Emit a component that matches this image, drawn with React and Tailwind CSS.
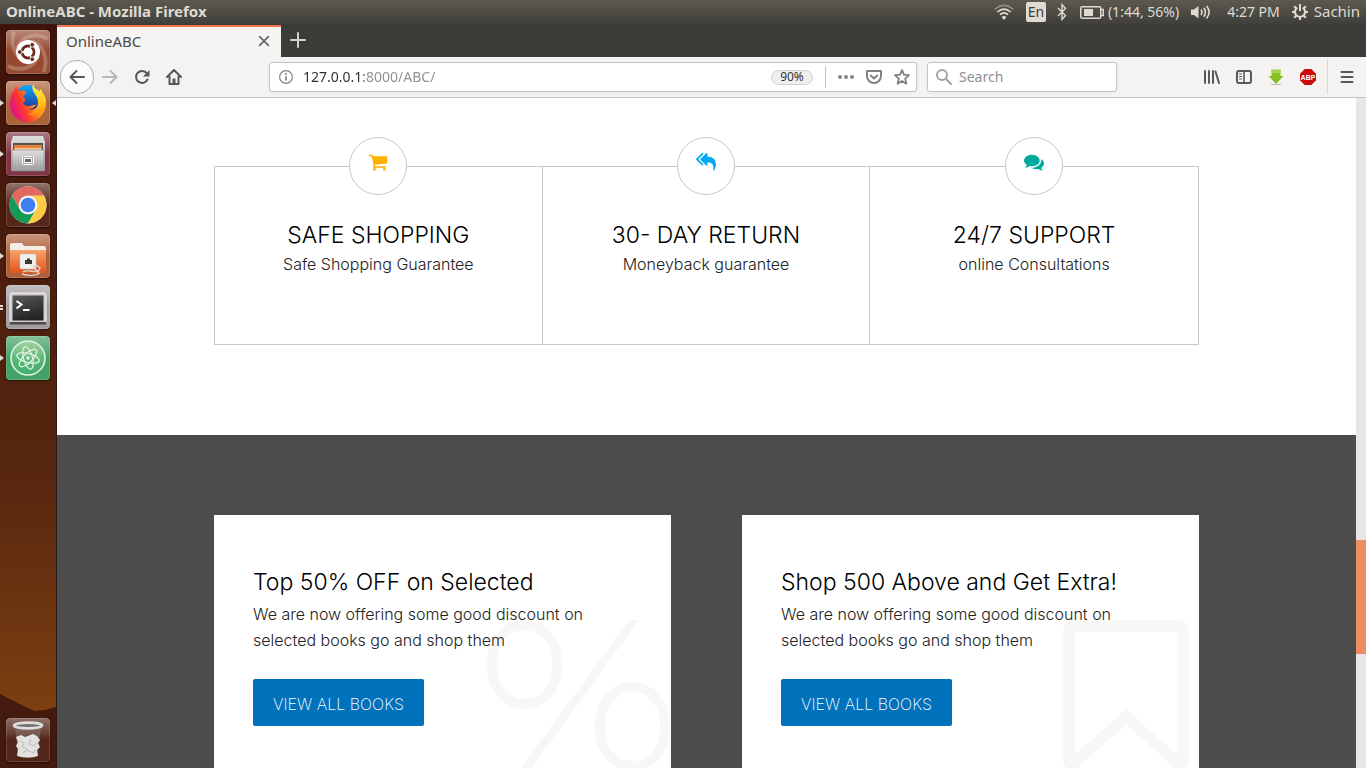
import React from "react";

const INK = "#585858";

/* ---------- System panel ---------- */

function WifiIcon() {
  return (
    <svg className="h-5 w-5" viewBox="0 0 20 20" fill="none" stroke="#dfdbd2" strokeWidth="1.6">
      <path d="M0.8 7.4Q10 -0.6 19.2 7.4" opacity=".45" />
      <path d="M3.4 10Q10 4.2 16.6 10" />
      <path d="M6 12.6Q10 9 14 12.6" />
      <path d="M7.6 15L10 18l2.400-3Q10 13 7.600 15z" fill="#dfdbd2" stroke="none" />
    </svg>
  );
}

function BluetoothIcon() {
  return (
    <svg className="h-5 w-3" viewBox="0 0 12 20" fill="none" stroke="#dfdbd2" strokeWidth="1.4">
      <path d="M2 6l7.5 7.5L6 17.5v-15L9.500 6.500 2 14" />
    </svg>
  );
}

function BatteryIcon() {
  return (
    <svg className="h-5 w-6" viewBox="0 0 24 20" fill="none">
      <rect x=".75" y="4.750" width="20" height="11.500" rx="1.500" stroke="#dfdbd2" strokeWidth="1.500" />
      <path d="M21 7.500h2.300v6H21" stroke="#dfdbd2" strokeWidth="1.400" />
      <rect x="4" y="7" width="9" height="7" fill="#dfdbd2" />
    </svg>
  );
}

function SoundIcon() {
  return (
    <svg className="h-5 w-5" viewBox="0 0 20 20" fill="none" stroke="#dfdbd2" strokeWidth="1.600">
      <path d="M0 7.500h3l4.500-3.500v12.500L3 13H0z" fill="#dfdbd2" stroke="none" />
      <path d="M10 7.500q1.800 2.700 0 5.500M12.800 5.800q3.200 4.400 0 9M15.600 4q5 6 0 12.500" />
    </svg>
  );
}

function SessionIcon() {
  return (
    <svg className="h-4 w-4" viewBox="0 0 16 16" fill="none" stroke="#dfdbd2" strokeWidth="2">
      <path d="M5.300 3.700a5 5 0 1 0 5.400 0" />
      <path d="M8 0v7" />
      <path d="M2.200 2.200l2 2M13.800 2.200l-2 2M0 8h3M16 8h-3M2.200 13.800l2-2M13.800 13.800l-2-2M8 16v-3" />
    </svg>
  );
}

function Panel() {
  return (
    <header className="flex h-6 shrink-0 items-center justify-between bg-gradient-to-b from-[#5c5950] to-[#403f3a] px-[6px] text-sm text-[#dfdbd2]">
      <h1 className="text-[15px] font-bold">OnlineABC - Mozilla Firefox</h1>
      <div className="flex items-center">
        <WifiIcon />
        <span className="ml-3 flex h-5 w-5 items-center justify-center rounded-xs bg-[#dfdbd2] text-sm text-[#3c3b37]">En</span>
        <span className="ml-[10px]"><BluetoothIcon /></span>
        <span className="ml-3"><BatteryIcon /></span>
        <span className="ml-1">(1:44, 56%)</span>
        <span className="ml-3"><SoundIcon /></span>
        <span className="ml-4">4:27 PM</span>
        <span className="mr-[6px] ml-3"><SessionIcon /></span>
        <span className="text-[15px]">Sachin</span>
      </div>
    </header>
  );
}

/* ---------- Launcher ---------- */

function UbuntuIcon() {
  return (
    <svg className="h-full w-full" viewBox="0 0 44 44">
      <g fill="none" stroke="#fff" strokeOpacity=".22" strokeWidth="4">
        <path d="M8 2c-4 12 0 24 12 30" />
        <path d="M2 36c12 6 26 2 30-10" />
        <path d="M38 42c4-14 0-26-12-31" />
        <path d="M42 9C30 2 16 6 11 18" />
      </g>
      <circle cx="22" cy="22" r="12" fill="#fff" />
      <circle cx="22" cy="22" r="6" fill="none" stroke="#6b2a18" strokeWidth="2.800" />
      <path d="M22 22h-9M22 22l4.500-8M22 22l4.500 8" stroke="#fff" strokeWidth="1.400" />
      <circle cx="22" cy="22" r="4.300" fill="#fff" />
      <g fill="#6b2a18" stroke="#fff" strokeWidth=".8">
        <circle cx="13.800" cy="22" r="2.300" />
        <circle cx="26.200" cy="14.800" r="2.300" />
        <circle cx="26.200" cy="29.200" r="2.300" />
      </g>
    </svg>
  );
}

function FirefoxIcon() {
  return (
    <svg className="h-full w-full" viewBox="0 0 44 44">
      <defs>
        <linearGradient id="ffBody" x1=".1" y1=".7" x2=".95" y2=".3">
          <stop offset="0" stopColor="#e3157c" />
          <stop offset=".3" stopColor="#ff3a30" />
          <stop offset=".6" stopColor="#ff8a1a" />
          <stop offset="1" stopColor="#ffd51f" />
        </linearGradient>
        <linearGradient id="ffTail" x1=".5" y1="0" x2=".5" y2="1">
          <stop offset="0" stopColor="#fff44f" />
          <stop offset=".55" stopColor="#ffc81e" />
          <stop offset="1" stopColor="#ff8a10" />
        </linearGradient>
        <linearGradient id="ffGlobe" x1=".5" y1="0" x2=".5" y2="1">
          <stop offset="0" stopColor="#10a8f5" />
          <stop offset="1" stopColor="#1d2f92" />
        </linearGradient>
      </defs>
      <circle cx="22" cy="17" r="13" fill="url(#ffGlobe)" />
      <path d="M8 9c1-2 2-4 3-5 0 3 1 5 3 6 3-1 5 0 6 1 0 2-3 3-3 5 2 1 3 2 2 4-3 1-2 4 2 5 4 1 6-2 9-1-2 3-5 4-8 4 8 2 13-4 11-13-1-4-3-6-4-8 5 2 9 7 11 14 0 12-8 20-18 20S4 34 4 23c0-6 2-11 4-14z" fill="url(#ffBody)" />
      <path d="M27 3c-3 8 5 10 5 18 0 7-5 11-10 12 7 3 16-1 18-9 1-7-2-11-4-13 0-1 0-2-1-3-1 1-1 2-1 3-3-2-6-4-7-8z" fill="url(#ffTail)" />
    </svg>
  );
}

function FilesIcon() {
  return (
    <svg className="h-full w-full" viewBox="0 0 44 44">
      <defs>
        <linearGradient id="cabinet" x1="0" y1="0" x2="0" y2="1">
          <stop offset="0" stopColor="#dedede" />
          <stop offset="1" stopColor="#9c9c9c" />
        </linearGradient>
      </defs>
      <path d="M7 4h30l2 6v29H5V10z" fill="url(#cabinet)" />
      <path d="M7 11h30v9H7z" fill="#55504b" />
      <path d="M8 13h28v7H8z" fill="#e6813c" />
      <path d="M9 16h26v4H9z" fill="#f3c79c" />
      <path d="M6 18h32v21H6z" fill="url(#cabinet)" stroke="#8c8c8c" strokeWidth=".6" />
      <rect x="16.500" y="24.500" width="11" height="8" rx="1" fill="#aaa" stroke="#fff" />
      <rect x="18.500" y="26.500" width="7" height="4" fill="#666" stroke="#fff" />
    </svg>
  );
}

function ChromeIcon() {
  return (
    <svg className="h-full w-full" viewBox="0 0 44 44">
      <circle cx="22" cy="22" r="18.500" fill="#fff" />
      <path d="M22 3.500A18.500 18.500 0 0 1 38 12.800H22a9.200 9.200 0 0 0-8 13.800L6 12.800A18.500 18.500 0 0 1 22 3.500z" fill="#e2695f" />
      <path d="M6 12.750A18.500 18.500 0 0 0 22 40.500l8-13.900a9.200 9.200 0 0 1-16 0z" fill="#149957" />
      <path d="M38 12.750A18.500 18.500 0 0 1 22 40.500l8-13.900a9.200 9.200 0 0 0-8-13.850z" fill="#fccc44" />
      <circle cx="22" cy="22" r="9.200" fill="#f5f5f5" />
      <circle cx="22" cy="22" r="7.300" fill="#3f7ef0" />
    </svg>
  );
}

function NetworkFolderIcon() {
  return (
    <svg className="h-full w-full" viewBox="0 0 44 44">
      <defs>
        <linearGradient id="folder" x1="0" y1="0" x2="0" y2="1">
          <stop offset="0" stopColor="#f6a56b" />
          <stop offset="1" stopColor="#e2541b" />
        </linearGradient>
      </defs>
      <path d="M4 11q0-2 2-2h10l2 3h20q2 0 2 2v4H4z" fill="#f4eeea" />
      <path d="M4 16h36v21q0 2-2 2H6q-2 0-2-2z" fill="url(#folder)" />
      <rect x="14" y="20" width="16" height="15" rx="1.500" fill="#f1efec" stroke="#c9c3bd" strokeWidth=".6" />
      <path d="M19 30v-4h2v-1.500h3V26h2v4z" fill="#3d3a36" />
      <path d="M17 38c4-3 12 1 15-1M16 40c6 2 14 2 18-1M27 33l5 5 2-4-4-3z" fill="none" stroke="#ddd7d2" strokeWidth="1.400" />
    </svg>
  );
}

function TerminalIcon() {
  return (
    <svg className="h-full w-full" viewBox="0 0 44 44">
      <defs>
        <linearGradient id="screen" x1="0" y1="0" x2=".3" y2="1">
          <stop offset="0" stopColor="#5a5b59" />
          <stop offset="1" stopColor="#232423" />
        </linearGradient>
      </defs>
      <rect x="4" y="8" width="36" height="30" rx="1.500" fill="#d0ccce" stroke="#f2f2f2" />
      <rect x="4" y="37" width="36" height="2.500" fill="#4c4a4b" />
      <rect x="6.500" y="10.500" width="31" height="25" fill="url(#screen)" />
      <path d="M10.500 16l5 3.500-5 4" fill="none" stroke="#fff" strokeWidth="2" />
      <path d="M17 25h6.500" stroke="#fff" strokeWidth="2" />
    </svg>
  );
}

function AtomIcon() {
  return (
    <svg className="h-full w-full" viewBox="0 0 44 44" fill="none" stroke="#e0f2e4">
      <defs>
        <linearGradient id="atomDisc" x1="0" y1="0" x2="0" y2="1">
          <stop offset="0" stopColor="#a5d3a0" />
          <stop offset=".6" stopColor="#55b574" />
          <stop offset="1" stopColor="#3fae70" />
        </linearGradient>
      </defs>
      <circle cx="22" cy="22" r="17" fill="url(#atomDisc)" strokeWidth="1.600" />
      <g strokeWidth="1.300">
        <ellipse cx="22" cy="22" rx="4.500" ry="11.500" transform="rotate(-15 22 22)" />
        <ellipse cx="22" cy="22" rx="4.500" ry="11.500" transform="rotate(45 22 22)" />
        <ellipse cx="22" cy="22" rx="4.500" ry="11.500" transform="rotate(105 22 22)" />
      </g>
      <circle cx="22" cy="22" r="1.800" fill="#e9f6ec" stroke="none" />
    </svg>
  );
}

function TrashIcon() {
  return (
    <svg className="h-full w-full" viewBox="0 0 44 44">
      <path d="M9 9h26l-3 29q-10 4-20 0z" fill="#8f7f79" fillOpacity=".45" />
      <path d="M10 19l5-2 4 2 3-1 5-2 4 2 3 4-2 3 2 4-3 3 1 6q-10 3-21 0l1-7-2-3 2-4z" fill="#e4e2e0" />
      <path d="M14 23l4 2-2 4 5 2M25 21l-2 5 5 2 3-4M17 35l4-3 6 3 3-3" fill="none" stroke="#c3c0bd" strokeWidth="1.200" />
      <ellipse cx="22" cy="7.500" rx="14" ry="2.900" fill="#75706c" stroke="#dedede" strokeWidth="2.600" />
    </svg>
  );
}

const LAUNCHER = [
  { name: "Search your computer", tile: "bg-[#96492f]", Icon: UbuntuIcon, marks: 0 },
  { name: "Firefox Web Browser", tile: "bg-[#ad633c]", Icon: FirefoxIcon, marks: 1, active: true },
  { name: "Files", tile: "bg-[#803642]", Icon: FilesIcon, marks: 1 },
  { name: "Google Chrome", tile: "bg-[#56281c]", Icon: ChromeIcon, marks: 0 },
  { name: "Network folder", tile: "bg-[#ad6038]", Icon: NetworkFolderIcon, marks: 1 },
  { name: "Terminal", tile: "bg-[#a39da0]", Icon: TerminalIcon, marks: 2 },
  { name: "Atom", tile: "bg-[#43a266]", Icon: AtomIcon, marks: 1 },
];

function Tile({ name, tile, Icon, marks = 0, active }) {
  return (
    <div className="relative flex w-full justify-center">
      {marks === 1 && <span className="absolute top-[19px] left-0 h-0 w-0 border-y-[3px] border-l-4 border-y-transparent border-l-[#e0dad6]" />}
      {marks === 2 && <span className="absolute top-5 left-0 h-[5px] w-[3px] border-y-2 border-[#e0dad6]" />}
      <button aria-label={name} className={`relative h-11 w-11 overflow-hidden rounded-[4px] shadow-[0_1px_2px_rgba(0,0,0,0.5)] ${tile}`}>
        <span className="absolute inset-0 rounded-[4px] bg-gradient-to-b from-white/35 to-white/0 to-50% inset-ring inset-ring-white/15" />
        <span className="relative block h-full w-full"><Icon /></span>
      </button>
      {active && <span className="absolute top-[19px] right-0 h-0 w-0 border-y-[3px] border-r-4 border-y-transparent border-r-[#e0dad6]" />}
    </div>
  );
}

function Launcher() {
  return (
    <nav aria-label="Launcher" className="relative flex w-[57px] shrink-0 flex-col justify-between border-r border-[#2f1a18] bg-gradient-to-b from-[#3f130b] via-[#57260f] via-60% to-[#854610] pt-[6px] pb-[6px]">
      <svg className="absolute bottom-0 left-0 h-[76px] w-full" viewBox="0 0 57 76" preserveAspectRatio="none">
        <path d="M0 2L12 8 24 14 35 19 46 18 57 15V76H0z" fill="#431a0d" />
      </svg>
      <div className="flex flex-col gap-[7px]">
        {LAUNCHER.map((item) => <Tile key={item.name} {...item} />)}
      </div>
      <Tile name="Trash" tile="bg-[#532519]" Icon={TrashIcon} />
    </nav>
  );
}

/* ---------- Browser chrome ---------- */

function Stroke({ className = "h-4 w-4", children, width = 2, color = INK }) {
  return (
    <svg className={className} viewBox="0 0 16 16" fill="none" stroke={color} strokeWidth={width} strokeLinecap="round" strokeLinejoin="round">
      {children}
    </svg>
  );
}

function TabStrip() {
  return (
    <div className="flex h-[33px] shrink-0 items-stretch bg-[#3c3b37] pt-px">
      <div className="flex w-56 items-center justify-between border-t-2 border-[#f0764b] bg-[#f5f4f2] pr-[10px] pb-[2px] pl-[9px] text-[15px] text-[#4a4a4a]">
        <span>OnlineABC</span>
        <button aria-label="Close tab">
          <Stroke className="h-[14px] w-[14px]" color="#6a6a6a"><path d="M3 3l10 10M13 3L3 13" /></Stroke>
        </button>
      </div>
      <button aria-label="New tab" className="flex w-[34px] items-center justify-center pb-[2px]">
        <Stroke color="#d5d3cd" width={2}><path d="M8 1v14M1 8h14" /></Stroke>
      </button>
    </div>
  );
}

function Toolbar() {
  return (
    <div className="flex h-[41px] shrink-0 items-center border-b border-[#c4c2c0] bg-[#f4f3f1] pr-[11px] pl-[3px]">
      <button aria-label="Back" className="flex h-[34px] w-[34px] items-center justify-center rounded-full border border-[#b0aeac] bg-[#fcfcfc]">
        <Stroke><path d="M15 8H1.500M7.500 2l-6 6 6 6" /></Stroke>
      </button>
      <button aria-label="Forward" className="ml-2">
        <Stroke color="#b9b8b7"><path d="M1 8h13.500M8.500 2l6 6-6 6" /></Stroke>
      </button>
      <button aria-label="Reload" className="ml-4">
        <svg className="h-4 w-4" viewBox="0 0 16 16" fill="none" stroke={INK} strokeWidth="2">
          <path d="M13.500 10.500A6 6 0 1 1 12.600 4" strokeLinecap="round" />
          <path d="M15.500 1v6.500H9z" fill={INK} stroke="none" />
        </svg>
      </button>
      <button aria-label="Home" className="ml-4">
        <svg className="h-4 w-4" viewBox="0 0 16 16" fill="none" stroke={INK} strokeWidth="2" strokeLinejoin="round" strokeLinecap="round">
          <path d="M1 8l7-7 7 7M3.500 7.500V15h9V7.500" />
          <path d="M6.500 15V9.500h3V15z" fill={INK} stroke="none" />
        </svg>
      </button>

      <div className="ml-[87px] flex h-[30px] min-w-0 flex-1 items-center rounded-[3px] border border-[#c6c4c2] bg-white pr-[6px] pl-[9px] shadow-[0_1px_3px_rgba(0,0,0,0.06)]">
        <svg className="h-[14px] w-[14px] shrink-0" viewBox="0 0 14 14" fill="none" stroke="#858585">
          <circle cx="7" cy="7" r="6.400" strokeWidth="1.200" />
          <path d="M7 6.200v4.300M7 3.200v1.700" strokeWidth="1.800" />
        </svg>
        <input
          aria-label="Address"
          defaultValue="127.0.0.1:8000/ABC/"
          className="ml-[10px] min-w-0 flex-1 bg-[linear-gradient(90deg,#2e2e2e_61px,#8f8f8f_61px)] bg-clip-text text-sm text-transparent outline-none"
        />
        <button className="flex h-[15px] w-[42px] items-center justify-center rounded-full border border-[#d2d2d2] bg-[#efefef] text-xs text-[#333]">90%</button>
        <span className="ml-3 h-[22px] w-px bg-[#c4c4c4]" />
        <button aria-label="Page actions" className="ml-3">
          <svg className="h-4 w-4" viewBox="0 0 16 16" fill="#858585"><circle cx="2" cy="8" r="2" /><circle cx="8" cy="8" r="2" /><circle cx="14" cy="8" r="2" /></svg>
        </button>
        <button aria-label="Save to Pocket" className="ml-3">
          <Stroke color="#808080"><path d="M1 2h14v5a7 7 0 0 1-14 0z" /><path d="M4.800 6.500L8 9.500l3.200-3" /></Stroke>
        </button>
        <button aria-label="Bookmark this page" className="ml-3">
          <Stroke color="#808080" width={1.8}><path d="M8 1l2 4.700 5 .5-3.800 3.400 1.200 5.100L8 12.100l-4.400 2.600 1.200-5.100L1 6.200l5-.5z" /></Stroke>
        </button>
      </div>

      <label className="ml-[10px] flex h-[30px] w-[190px] items-center rounded-[3px] border border-[#c6c4c2] bg-white pl-2 shadow-[0_1px_3px_rgba(0,0,0,0.06)]">
        <Stroke color="#a3a3a3"><circle cx="6" cy="6" r="5" /><path d="M9.800 9.800L15 15" /></Stroke>
        <input type="search" aria-label="Search" placeholder="Search" className="ml-[7px] min-w-0 flex-1 text-sm outline-none placeholder:text-[#8f8f8f]" />
      </label>

      <button aria-label="Library" className="ml-[87px]">
        <Stroke><path d="M1 2v12M5 2v12M9 2v12M11.500 2.500L15 14" /></Stroke>
      </button>
      <button aria-label="Sidebars" className="ml-4">
        <Stroke><rect x="1" y="2" width="14" height="12" rx="2" /><path d="M8 2v12" strokeWidth="1.600" /><path d="M3.500 5h2M3.500 7.500h2M3.500 10h2" strokeWidth="1" /></Stroke>
      </button>
      <button aria-label="Downloads" className="ml-4">
        <svg className="h-4 w-4" viewBox="0 0 16 16"><path d="M3.500.5h2V2h1V.5h3V2h1V.5h2V7h3L8 15 .5 7h3z" fill="#87bf25" /><path d="M3.500 1h9v3h-9z" fill="#a5d54a" /><path d="M3 15.500h10" stroke="#b9bdb0" /></svg>
      </button>
      <button aria-label="Adblock Plus" className="ml-4">
        <svg className="h-4 w-4" viewBox="0 0 16 16">
          <path d="M4.700 0h6.600L16 4.700v6.600L11.300 16H4.700L0 11.300V4.700z" fill="#cb0a0a" />
          <text x="8" y="10.500" textAnchor="middle" fontSize="7" fontWeight="700" fill="#fff" fontFamily="Liberation Sans, sans-serif">ABP</text>
        </svg>
      </button>
      <span className="ml-[11px] h-[34px] w-px bg-[#d8d6d4]" />
      <button aria-label="Open menu" className="ml-[11px]">
        <Stroke><path d="M2.500 3h11M2.500 8h11M2.500 13h11" /></Stroke>
      </button>
    </div>
  );
}

/* ---------- Page ---------- */

const SERVICES = [
  {
    title: "SAFE SHOPPING",
    text: "Safe Shopping Guarantee",
    color: "text-[#ffb000]",
    path: "M704 1536q0 52-38 90t-90 38-90-38-38-90 38-90 90-38 90 38 38 90zm896 0q0 52-38 90t-90 38-90-38-38-90 38-90 90-38 90 38 38 90zm128-1088v512q0 24-16.5 42.5t-40.5 21.5l-1044 122q13 60 13 70 0 16-24 64h920q26 0 45 19t19 45-19 45-45 19h-1024q-26 0-45-19t-19-45q0-11 8-31.5t16-36 21.5-40 15.5-29.5l-177-823h-204q-26 0-45-19t-19-45 19-45 45-19h256q16 0 28.5 6.5t19.5 15.5 13 24.5 8 26 5.5 29.5 4.5 26h1201q26 0 45 19t19 45z",
  },
  {
    title: "30- DAY RETURN",
    text: "Moneyback guarantee",
    color: "text-[#00a9f0]",
    path: "M640 1082v70q0 42-39 59-13 5-25 5-27 0-45-19l-512-512q-19-19-19-45t19-45l512-512q29-31 70-14 39 17 39 59v69l-397 398q-19 19-19 45t19 45zm1152 58q0 58-17 133.500t-38.500 138-48 125-40.500 90.500l-20 40q-8 17-28 17-6 0-9-1-25-8-23-34 43-400-106-565-64-71-170.500-110.500t-267.500-52.500v251q0 42-39 59-13 5-25 5-27 0-45-19l-512-512q-19-19-19-45t19-45l512-512q29-31 70-14 39 17 39 59v262q411 28 599 221 169 173 169 509z",
  },
  {
    title: "24/7 SUPPORT",
    text: "online Consultations",
    color: "text-[#00a99d]",
    path: "M1408 768q0 139-94 257t-256.500 186.500-353.500 68.500q-86 0-176-16-124 88-278 128-36 9-86 16h-3q-11 0-20.500-8t-11.500-21q-1-3-1-6.500t.5-6.500 2-6l2.500-5 3.500-5.500 4-5 4.500-5 4-4.500q5-6 23-25t26-29.500 22.500-29 25-38.500 20.500-44q-124-72-195-177t-71-224q0-139 94-257t256.500-186.500 353.500-68.500 353.500 68.500 256.500 186.500 94 257zm384 256q0 120-71 224.500t-195 176.500q10 24 20.500 44t25 38.500 22.500 29 26 29.500 23 25q1 1 4 4.500t4.500 5 4 5 3.500 5.500l2.500 5 2 6 .5 6.500-1 6.500q-3 14-13 22t-22 7q-50-7-86-16-154-40-278-128-90 16-176 16-271 0-472-132 58 4 88 4 161 0 309-45t264-129q125-92 192-212t67-254q0-77-23-152 129 71 204 178t75 230z",
  },
];

function Services() {
  return (
    <section className="bg-white px-8 pt-[68px] pb-[90px]">
      <div className="mx-auto grid max-w-[985px] grid-cols-3 divide-x divide-[#c8c8c8] border border-[#c8c8c8]">
        {SERVICES.map((s) => (
          <article key={s.title} className="flex flex-col items-center pb-[67px] text-center">
            <span className={`-mt-[30px] flex h-[58px] w-[58px] justify-center rounded-full border border-[#c8c8c8] bg-white pt-[14px] ${s.color}`}>
              <svg className="h-5 w-5" viewBox="0 0 1792 1792" fill="currentColor"><path d={s.path} /></svg>
            </span>
            <h2 className="mt-[27px] text-[23px] leading-[26px] font-light text-black">{s.title}</h2>
            <p className="mt-[3px] text-base leading-[26px] font-light text-[#222]">{s.text}</p>
          </article>
        ))}
      </div>
    </section>
  );
}

function PercentMark() {
  return (
    <svg className="absolute right-0 bottom-4 h-[152px] w-[184px]" viewBox="0 0 184 152" fill="none" stroke="#000" strokeOpacity=".032" strokeWidth="10">
      <rect x="5" y="5" width="65" height="79" rx="32" ry="36" />
      <path d="M142 0h10L42 152H31z" fill="#000" fillOpacity=".032" stroke="none" />
      <rect x="113" y="67" width="65" height="79" rx="32" ry="36" />
    </svg>
  );
}

function BookmarkMark() {
  return (
    <svg className="absolute right-[10px] bottom-4 h-[152px] w-[126px]" viewBox="0 0 126 152" fill="none" stroke="#000" strokeOpacity=".032" strokeWidth="11.500">
      <path d="M12 6h102q6 0 6 6v128q0 5-5 3L63 97 11 143q-5 2-5-3V12q0-6 6-6z" />
    </svg>
  );
}

const OFFERS = [
  { title: "Top 50% OFF on Selected", Mark: PercentMark },
  { title: "Shop 500 Above and Get Extra!", Mark: BookmarkMark },
];

function Offers() {
  return (
    <section className="flex-1 bg-[#4c4c4c] px-8 pt-20 pb-20">
      <div className="mx-auto grid max-w-[985px] grid-cols-2 gap-[71px]">
        {OFFERS.map(({ title, Mark }) => (
          <article key={title} className="relative overflow-hidden bg-white px-[39px] pt-[54px] pb-[62px]">
            <h2 className="text-[23px] leading-[26px] font-light text-black">{title}</h2>
            <p className="mt-[6px] max-w-[350px] text-base leading-[26px] font-light text-[#222]">
              We are now offering some good discount on selected books go and shop them
            </p>
            <a href="#books" className="mt-[26px] inline-flex h-[47px] w-[171px] items-center justify-center rounded-xs bg-[#0072bc] pt-[2px] text-base font-extralight text-white">
              VIEW ALL BOOKS
            </a>
            <Mark />
          </article>
        ))}
      </div>
    </section>
  );
}

export default function App() {
  return (
    <div className="flex h-screen flex-col overflow-hidden font-['Noto_Sans',sans-serif]">
      <Panel />
      <div className="flex min-h-0 flex-1">
        <Launcher />
        <div className="flex min-w-0 flex-1 flex-col">
          <TabStrip />
          <Toolbar />
          <div className="flex min-h-0 flex-1">
            <main className="flex min-w-0 flex-1 flex-col overflow-hidden font-[Inter,sans-serif]">
              <Services />
              <Offers />
            </main>
            <div aria-hidden="true" className="flex w-[10px] shrink-0 flex-col bg-[#e6e6e6]">
              <div className="basis-[66%]" />
              <div className="basis-[17%] bg-[#f08c64]" />
            </div>
          </div>
        </div>
      </div>
    </div>
  );
}
